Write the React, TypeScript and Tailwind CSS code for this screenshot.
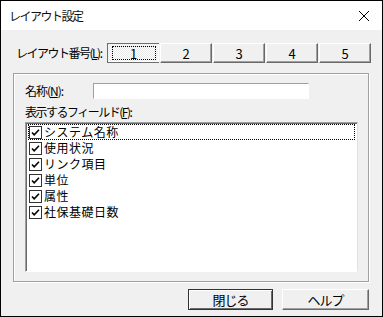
import React from "react";

const font = { fontFamily: '"Noto Sans CJK JP", "Noto Sans", sans-serif' };

function Check() {
  return (
    <svg width="13" height="13" viewBox="0 0 13 13" className="shrink-0">
      <rect x="0.5" y="0.5" width="12" height="12" fill="#fff" stroke="#333" />
      <path d="M3 6.5 L5.2 8.8 L10 3.8" fill="none" stroke="#000" strokeWidth="1.6" />
    </svg>
  );
}

const items = ["システム名称", "使用状況", "リンク項目", "単位", "属性", "社保基礎日数"];

export default function App() {
  return (
    <div
      className="w-[383px] h-[317px] border border-black bg-[#f0f0f0] flex flex-col text-[12px] text-black leading-none"
      style={font}
    >
      <div className="h-[29px] bg-white flex items-center justify-between pl-[8px] pr-[12px]">
        <span className="text-[12px] tracking-[-1.5px] text-[#111]">レイアウト設定</span>
        <svg width="12" height="12" viewBox="0 0 12 12">
          <path d="M1 1 L11 11 M11 1 L1 11" stroke="#000" strokeWidth="1" />
        </svg>
      </div>
      <div className="flex flex-col pl-[12px]">
        <div className="flex items-center mt-[13px] h-[20px]">
          <span className="ml-[3px] w-[91px] tracking-[-1.5px]">
            レイアウト番号(<span className="underline">L</span>):
          </span>
          <div className="w-[52px] h-[20px] border-t border-l border-[#6d6d6d] border-b border-r-0 flex items-center justify-center bg-[repeating-conic-gradient(#ffffff_0_25%,#e8e8e8_0_50%)] bg-[length:2px_2px] shadow-[inset_-1px_-1px_0_#fff] text-[13px]">
            <div className="w-[44px] h-[14px] border border-dotted border-black flex items-center justify-center">1</div>
          </div>
          {["2", "3", "4", "5"].map((n) => (
            <div
              key={n}
              className="w-[52px] h-[20px] border-t border-l border-white border-b border-r border-b-[#696969] border-r-[#696969] shadow-[inset_-1px_-1px_0_#a0a0a0] flex items-center justify-center ml-[1px] text-[13px]"
            >
              {n}
            </div>
          ))}
        </div>
        <div className="mt-[10px] w-[356px] h-[209px] border border-[#a0a0a0] shadow-[inset_1px_1px_0_#fff,1px_1px_0_#fff] flex flex-col pl-[11px]">
          <div className="flex items-center mt-[9px] h-[16px]">
            <span className="w-[68px] tracking-[-1px]">
              名称(<span className="underline">N</span>):
            </span>
            <div className="w-[216px] h-[16px] border-t border-l border-[#a0a0a0] border-b border-r border-b-white border-r-white bg-white" />
          </div>
          <div className="mt-[5px] h-[16px] flex items-center tracking-[-1.5px]">
            表示するフィールド(<span className="underline">F</span>):
          </div>
          <div className="mt-[2px] w-[333px] h-[150px] border-t border-l border-[#a0a0a0] border-b border-r border-b-white border-r-[#e0e0e0] shadow-[inset_1px_1px_0_#696969] bg-white pt-[1px] pl-[3px]">
            {items.map((t, i) => (
              <div
                key={t}
                className={
                  "h-[16px] flex items-center gap-[2px] " +
                  (i === 0 ? "border border-dotted border-black w-[327px] -ml-[1px]" : "")
                }
              >
                <Check />
                <span className="text-[12px] leading-[12px] tracking-[0.5px]">{t}</span>
              </div>
            ))}
          </div>
        </div>
        <div className="flex mt-[7px] ml-[175px] gap-[9px] text-[13px]">
          <div className="w-[85px] h-[21px] border border-[#333] shadow-[inset_1px_1px_0_#fff,inset_-1px_-1px_0_#696969] flex items-center justify-center tracking-[-1px]">
            閉じる
          </div>
          <div className="w-[87px] h-[21px] border-t border-l border-white border-b border-r border-b-[#696969] border-r-[#696969] shadow-[inset_-1px_-1px_0_#a0a0a0] flex items-center justify-center tracking-[-1px]">
            ヘルプ
          </div>
        </div>
      </div>
    </div>
  );
}
